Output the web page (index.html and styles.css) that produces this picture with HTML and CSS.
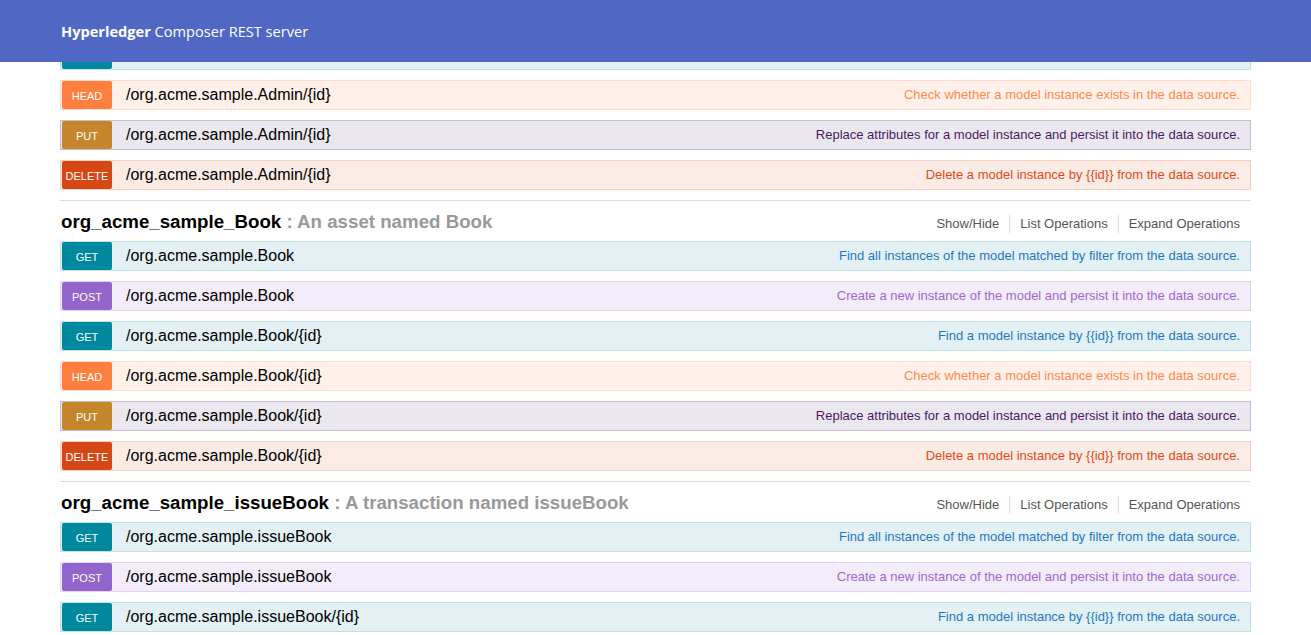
FILE: index.html
```html
<!DOCTYPE html>
<html>
<head>
<meta charset="utf-8">
<title>Hyperledger Composer REST server</title>
<link rel="stylesheet" href="styles.css">
</head>
<body>
<header class="topbar">
  <div class="brand"><b>Hyperledger</b> Composer REST server</div>
</header>
<main class="content">
  <ul class="ops">
    <li class="op get scrolled"><span class="method"></span><span class="path"></span><span class="desc"></span></li>
    <li class="op head"><span class="method">HEAD</span><span class="path">/org.acme.sample.Admin/{id}</span><span class="desc">Check whether a model instance exists in the data source.</span></li>
    <li class="op put"><span class="method">PUT</span><span class="path">/org.acme.sample.Admin/{id}</span><span class="desc">Replace attributes for a model instance and persist it into the data source.</span></li>
    <li class="op delete"><span class="method">DELETE</span><span class="path">/org.acme.sample.Admin/{id}</span><span class="desc">Delete a model instance by {{id}} from the data source.</span></li>
  </ul>

  <section class="resource">
    <div class="res-heading">
      <h2><span class="res-name">org_acme_sample_Book</span><span class="res-desc"> : An asset named Book</span></h2>
      <ul class="res-links"><li>Show/Hide</li><li>List Operations</li><li>Expand Operations</li></ul>
    </div>
    <ul class="ops">
      <li class="op get"><span class="method">GET</span><span class="path">/org.acme.sample.Book</span><span class="desc">Find all instances of the model matched by filter from the data source.</span></li>
      <li class="op post"><span class="method">POST</span><span class="path">/org.acme.sample.Book</span><span class="desc">Create a new instance of the model and persist it into the data source.</span></li>
      <li class="op get"><span class="method">GET</span><span class="path">/org.acme.sample.Book/{id}</span><span class="desc">Find a model instance by {{id}} from the data source.</span></li>
      <li class="op head"><span class="method">HEAD</span><span class="path">/org.acme.sample.Book/{id}</span><span class="desc">Check whether a model instance exists in the data source.</span></li>
      <li class="op put"><span class="method">PUT</span><span class="path">/org.acme.sample.Book/{id}</span><span class="desc">Replace attributes for a model instance and persist it into the data source.</span></li>
      <li class="op delete"><span class="method">DELETE</span><span class="path">/org.acme.sample.Book/{id}</span><span class="desc">Delete a model instance by {{id}} from the data source.</span></li>
    </ul>
  </section>

  <section class="resource">
    <div class="res-heading">
      <h2><span class="res-name">org_acme_sample_issueBook</span><span class="res-desc"> : A transaction named issueBook</span></h2>
      <ul class="res-links"><li>Show/Hide</li><li>List Operations</li><li>Expand Operations</li></ul>
    </div>
    <ul class="ops">
      <li class="op get"><span class="method">GET</span><span class="path">/org.acme.sample.issueBook</span><span class="desc">Find all instances of the model matched by filter from the data source.</span></li>
      <li class="op post"><span class="method">POST</span><span class="path">/org.acme.sample.issueBook</span><span class="desc">Create a new instance of the model and persist it into the data source.</span></li>
      <li class="op get last"><span class="method">GET</span><span class="path">/org.acme.sample.issueBook/{id}</span><span class="desc">Find a model instance by {{id}} from the data source.</span></li>
    </ul>
  </section>
</main>
</body>
</html>
```
FILE: styles.css
```css
html, body {
  margin: 0;
  padding: 0;
  background: #ffffff;
  font-family: "Liberation Sans", Arial, sans-serif;
  overflow: hidden;
}

.topbar {
  position: fixed;
  top: 0;
  left: 0;
  right: 0;
  height: 62px;
  background: #5067c4;
  z-index: 10;
  display: flex;
  align-items: center;
  padding-left: 61px;
}

.brand {
  font-family: "Open Sans", "Noto Sans", sans-serif;
  font-size: 14.6px;
  color: #ffffff;
}

.brand b {
  font-weight: 700;
}

.content {
  padding: 40px 0 0 60px;
  width: 1191px;
}

.ops {
  list-style: none;
  margin: 0;
  padding: 0;
}

.op {
  display: flex;
  align-items: center;
  height: 28px;
  border: 1px solid;
  margin-bottom: 10px;
  padding-left: 1px;
}

.op.last {
  margin-bottom: 0;
}

.method {
  width: 50px;
  height: 28px;
  border-radius: 2px;
  color: #ffffff;
  font-size: 11px;
  line-height: 30px;
  text-align: center;
  text-transform: uppercase;
  flex: none;
}

.path {
  font-size: 16px;
  color: #000000;
  padding-left: 14px;
  padding-bottom: 1px;
  flex: none;
}

.desc {
  margin-left: auto;
  padding-right: 10px;
  padding-bottom: 2px;
  font-size: 13px;
}

.get { background: #e3f1f5; border-color: #bfe1e8; }
.get .method { background: #00889f; }
.get .desc { color: #1f77c6; }

.post { background: #f3edfa; border-color: #e2d3f3; }
.post .method { background: #9264cc; }
.post .desc { color: #a066d6; }

.head { background: #fff0e9; border-color: #ffdccb; }
.head .method { background: #ff7f3e; }
.head .desc { color: #ff8a4e; }

.put { background: #ebe7ee; border-color: #c6bad4; }
.put .method { background: #c5862b; }
.put .desc { color: #4a1a69; }

.delete { background: #fbebe5; border-color: #f6d0c2; }
.delete .method { background: #d54714; }
.delete .desc { color: #e24a17; }

.resource {
  border-top: 1px solid #dddddd;
}

.res-heading {
  display: flex;
  align-items: center;
  height: 40px;
}

.res-heading h2 {
  margin: 0;
  font-size: 18.7px;
  font-weight: 700;
  padding-left: 1px;
  padding-top: 2px;
}

.res-name { color: #000000; }
.res-desc { color: #999999; }

.res-links {
  list-style: none;
  margin: 6px 0 0 auto;
  padding: 0 11px 0 0;
  display: flex;
  font-size: 13px;
  color: #555555;
}

.res-links li {
  padding: 0 10px;
  line-height: 18px;
  border-left: 1px solid #dddddd;
}

.res-links li:first-child {
  border-left: none;
}

.res-links li:last-child {
  padding-right: 0;
}
```
